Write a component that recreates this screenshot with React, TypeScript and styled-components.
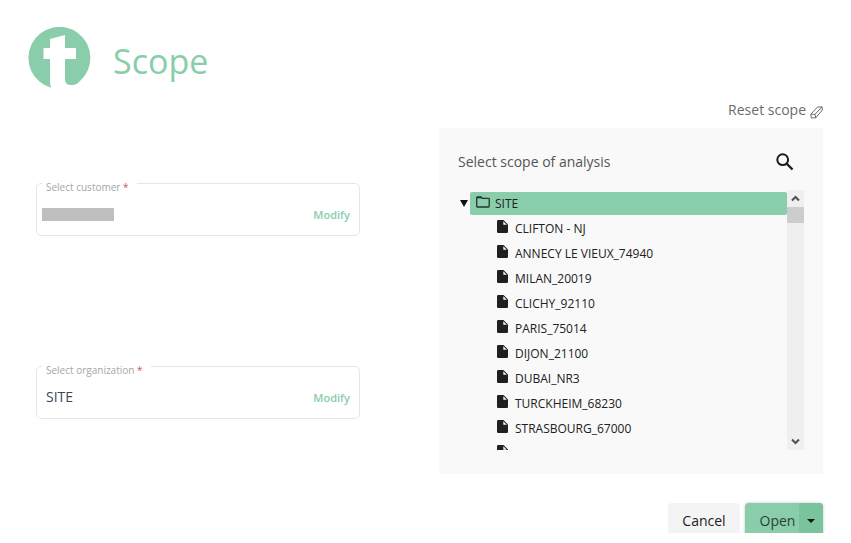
import React from "react";
import styled, { createGlobalStyle } from "styled-components";

const green = "#89cdaa";

const GlobalStyle = createGlobalStyle`
  * { box-sizing: border-box; }
  body {
    margin: 0;
    background: #fff;
    font-family: "Open Sans", "Noto Sans", sans-serif;
    color: #212121;
  }
  button { font: inherit; color: inherit; border: 0; padding: 0; background: none; cursor: pointer; }
`;

const Page = styled.main`
  padding: 27px 28px 10px;
`;

const Header = styled.header`
  display: flex;
  align-items: center;
  gap: 21px;
  height: 62px;
`;

const Title = styled.h1`
  margin: 0;
  padding-top: 6px;
  font-size: 34px;
  line-height: 46px;
  font-weight: 400;
  color: ${green};
`;

const Content = styled.div`
  display: grid;
  grid-template-columns: minmax(0, 324fr) minmax(0, 384fr);
  column-gap: 79px;
  padding-left: 8px;
`;

const Fields = styled.div`
  display: flex;
  flex-direction: column;
  gap: 120px;
  padding-top: 84px;
`;

const Field = styled.fieldset`
  min-width: 0;
  height: 63px;
  margin: 0;
  padding: 0 9px 0 5px;
  border: 1px solid #e6e6e6;
  border-radius: 5px;
`;

const Legend = styled.legend`
  padding: 7px 8px 0 4px;
  font-size: 10px;
  line-height: 14px;
  color: #a6a6a6;
`;

const Required = styled.span`
  color: #d9534f;
`;

const FieldRow = styled.div`
  display: flex;
  align-items: center;
  justify-content: space-between;
  height: 40px;
`;

const Redacted = styled.span`
  width: 72px;
  height: 13px;
  background: #bfbfbf;
`;

const Value = styled.span`
  padding-left: 4px;
  font-size: 14px;
  line-height: 20px;
  color: #3e4655;
`;

const Modify = styled.button`
  && {
    padding-top: 2px;
    color: ${green};
    font-size: 11px;
    line-height: 16px;
    font-weight: 600;
  }
`;

const Scope = styled.section`
  display: flex;
  flex-direction: column;
`;

const Reset = styled.button`
  && {
    display: flex;
    align-items: center;
    align-self: flex-end;
    gap: 4px;
    margin-top: 11px;
    color: #6b6b6b;
    font-size: 14px;
    line-height: 20px;
  }
  svg { margin-top: 4px; }
`;

const Panel = styled.div`
  margin-top: 8px;
  padding: 22px 19px 24px;
  background: #f9f9f9;
`;

const PanelHead = styled.div`
  display: flex;
  align-items: center;
  justify-content: space-between;
  height: 24px;
  padding-right: 10px;
`;

const PanelTitle = styled.h2`
  margin: 0;
  font-size: 14px;
  line-height: 20px;
  font-weight: 400;
  color: #555;
`;

const IconButton = styled.button`
  display: flex;
`;

const TreeBox = styled.div`
  display: flex;
  height: 260px;
  margin-top: 16px;
`;

const Tree = styled.ul`
  flex: 1;
  min-width: 0;
  margin: 0;
  padding: 2px 0 0;
  overflow: hidden;
  list-style: none;
`;

const Root = styled.li`
  display: flex;
  align-items: center;
`;

const Caret = styled.button`
  display: flex;
  width: 12px;
  && { padding-left: 2px; }
`;

const Selected = styled.span`
  flex: 1;
  display: flex;
  align-items: center;
  gap: 5px;
  height: 23px;
  padding-left: 6px;
  border-radius: 2px;
  background: ${green};
  font-size: 12px;
  line-height: 23px;
  svg { margin-bottom: 3px; }
`;

const Leaf = styled.li`
  display: flex;
  align-items: center;
  gap: 7px;
  height: 25px;
  padding: 2px 0 0 39px;
  font-size: 12px;
  line-height: 23px;
  svg { flex: none; margin-bottom: 4px; }
`;

const Scrollbar = styled.div`
  display: flex;
  flex-direction: column;
  width: 17px;
  background: #efefef;
`;

const Arrow = styled.button`
  display: grid;
  place-items: center;
  height: 17px;
`;

const Thumb = styled.div`
  height: 16px;
  margin-bottom: auto;
  background: #cdcdcd;
`;

const Footer = styled.footer`
  display: flex;
  justify-content: flex-end;
  align-items: flex-start;
  gap: 5px;
  height: 33px;
  margin: 26px -4px 0 0;
  padding: 3px 4px 0 0;
  overflow: hidden;
`;

const Cancel = styled.button`
  && {
    width: 72px;
    height: 35px;
    border-radius: 4px;
    background: #f4f4f4;
    font-size: 14px;
  }
`;

const Split = styled.div`
  display: flex;
  width: 78px;
  height: 35px;
  overflow: hidden;
  border-radius: 4px;
  background: ${green};
  box-shadow: 0 0 3px #00000040;
`;

const Open = styled.button`
  && {
    width: 54px;
    padding-left: 11px;
    font-size: 14px;
    color: #2c4237;
  }
`;

const OpenMore = styled.button`
  && {
    flex: 1;
    display: grid;
    place-items: center;
    background: #79c49d;
  }
`;

const sites = [
  "CLIFTON - NJ",
  "ANNECY LE VIEUX_74940",
  "MILAN_20019",
  "CLICHY_92110",
  "PARIS_75014",
  "DIJON_21100",
  "DUBAI_NR3",
  "TURCKHEIM_68230",
  "STRASBOURG_67000",
  "",
];

const Logo = () => (
  <svg width="64" height="62" viewBox="-1 0 64 62" role="img" aria-label="Logo">
    <path
      fill={green}
      d="M22 60.700A31 31 0 1 1 51 54C48 57.500 46 58 42.500 58C38 58 36 56 36 52V32H47V21H36V8L21 12V21H14.500V32H21V53Q21 58 22 60.700Z"
    />
  </svg>
);

const Eraser = () => (
  <svg width="13" height="13" viewBox="0 0 13 13" fill="none" stroke="#6b6b6b" strokeLinejoin="round">
    <path d="M0.800 8.200L7.500 1L12 0.900L12.300 4L5.800 11.800L1.300 12ZM0.800 8.200L5 8.300L5.800 11.800M5 8.300L12 0.900" />
  </svg>
);

const Search = () => (
  <svg width="18" height="18" viewBox="0 0 18 18" fill="none" stroke="#1b1b1b">
    <circle cx="6.700" cy="6.700" r="5.400" strokeWidth="2" />
    <path d="M10.500 10.500L16.500 16.500" strokeWidth="2.400" />
  </svg>
);

const Folder = () => (
  <svg width="14" height="12" viewBox="0 0 14 12" fill="none" stroke="#26332c" strokeWidth="1.300">
    <path d="M0.700 1.700Q0.700 1 1.400 1H5L6.300 2.300H12.500Q13.200 2.300 13.200 3V10.300Q13.200 11 12.500 11H1.400Q0.700 11 0.700 10.300Z" />
    <path d="M1 1.700H5.500" />
  </svg>
);

const File = () => (
  <svg width="11" height="13" viewBox="0 0 11 13">
    <path fill="#1f1f1f" d="M1.300 0H6.500L11 4.500V11.700Q11 13 9.700 13H1.300Q0 13 0 11.700V1.300Q0 0 1.300 0Z" />
    <path fill="#f9f9f9" d="M6.300 1.200L9.800 4.700H6.300Z" />
  </svg>
);

const Chevron = ({ down }: { down?: boolean }) => (
  <svg width="9" height="7" viewBox="0 0 9 7" fill="none" stroke="#505050" strokeWidth="2">
    <path d={down ? "M1 1.500L4.500 5L8 1.500" : "M1 5.500L4.500 2L8 5.500"} />
  </svg>
);

const Triangle = ({ w, h }: { w: number; h: number }) => (
  <svg width={w} height={h} viewBox="0 0 8 8" preserveAspectRatio="none">
    <path d="M0 0H8L4 8Z" fill="#111" />
  </svg>
);

type SelectionProps = { label: string; value?: string };

const Selection = ({ label, value }: SelectionProps) => (
  <Field>
    <Legend>
      {label} <Required>*</Required>
    </Legend>
    <FieldRow>
      {value ? <Value>{value}</Value> : <Redacted />}
      <Modify type="button">Modify</Modify>
    </FieldRow>
  </Field>
);

export default function App() {
  return (
    <>
      <GlobalStyle />
      <Page>
        <Header>
          <Logo />
          <Title>Scope</Title>
        </Header>
        <Content>
          <Fields>
            <Selection label="Select customer" />
            <Selection label="Select organization" value="SITE" />
          </Fields>
          <Scope>
            <Reset type="button">
              Reset scope
              <Eraser />
            </Reset>
            <Panel>
              <PanelHead>
                <PanelTitle>Select scope of analysis</PanelTitle>
                <IconButton type="button" aria-label="Search">
                  <Search />
                </IconButton>
              </PanelHead>
              <TreeBox>
                <Tree>
                  <Root>
                    <Caret type="button" aria-label="Collapse SITE">
                      <Triangle w={8} h={7} />
                    </Caret>
                    <Selected>
                      <Folder />
                      SITE
                    </Selected>
                  </Root>
                  {sites.map((site) => (
                    <Leaf key={site}>
                      <File />
                      {site}
                    </Leaf>
                  ))}
                </Tree>
                <Scrollbar>
                  <Arrow type="button" aria-label="Scroll up">
                    <Chevron />
                  </Arrow>
                  <Thumb />
                  <Arrow type="button" aria-label="Scroll down">
                    <Chevron down />
                  </Arrow>
                </Scrollbar>
              </TreeBox>
            </Panel>
          </Scope>
        </Content>
        <Footer>
          <Cancel type="button">Cancel</Cancel>
          <Split>
            <Open type="button">Open</Open>
            <OpenMore type="button" aria-label="More open options">
              <Triangle w={8} h={4} />
            </OpenMore>
          </Split>
        </Footer>
      </Page>
    </>
  );
}
